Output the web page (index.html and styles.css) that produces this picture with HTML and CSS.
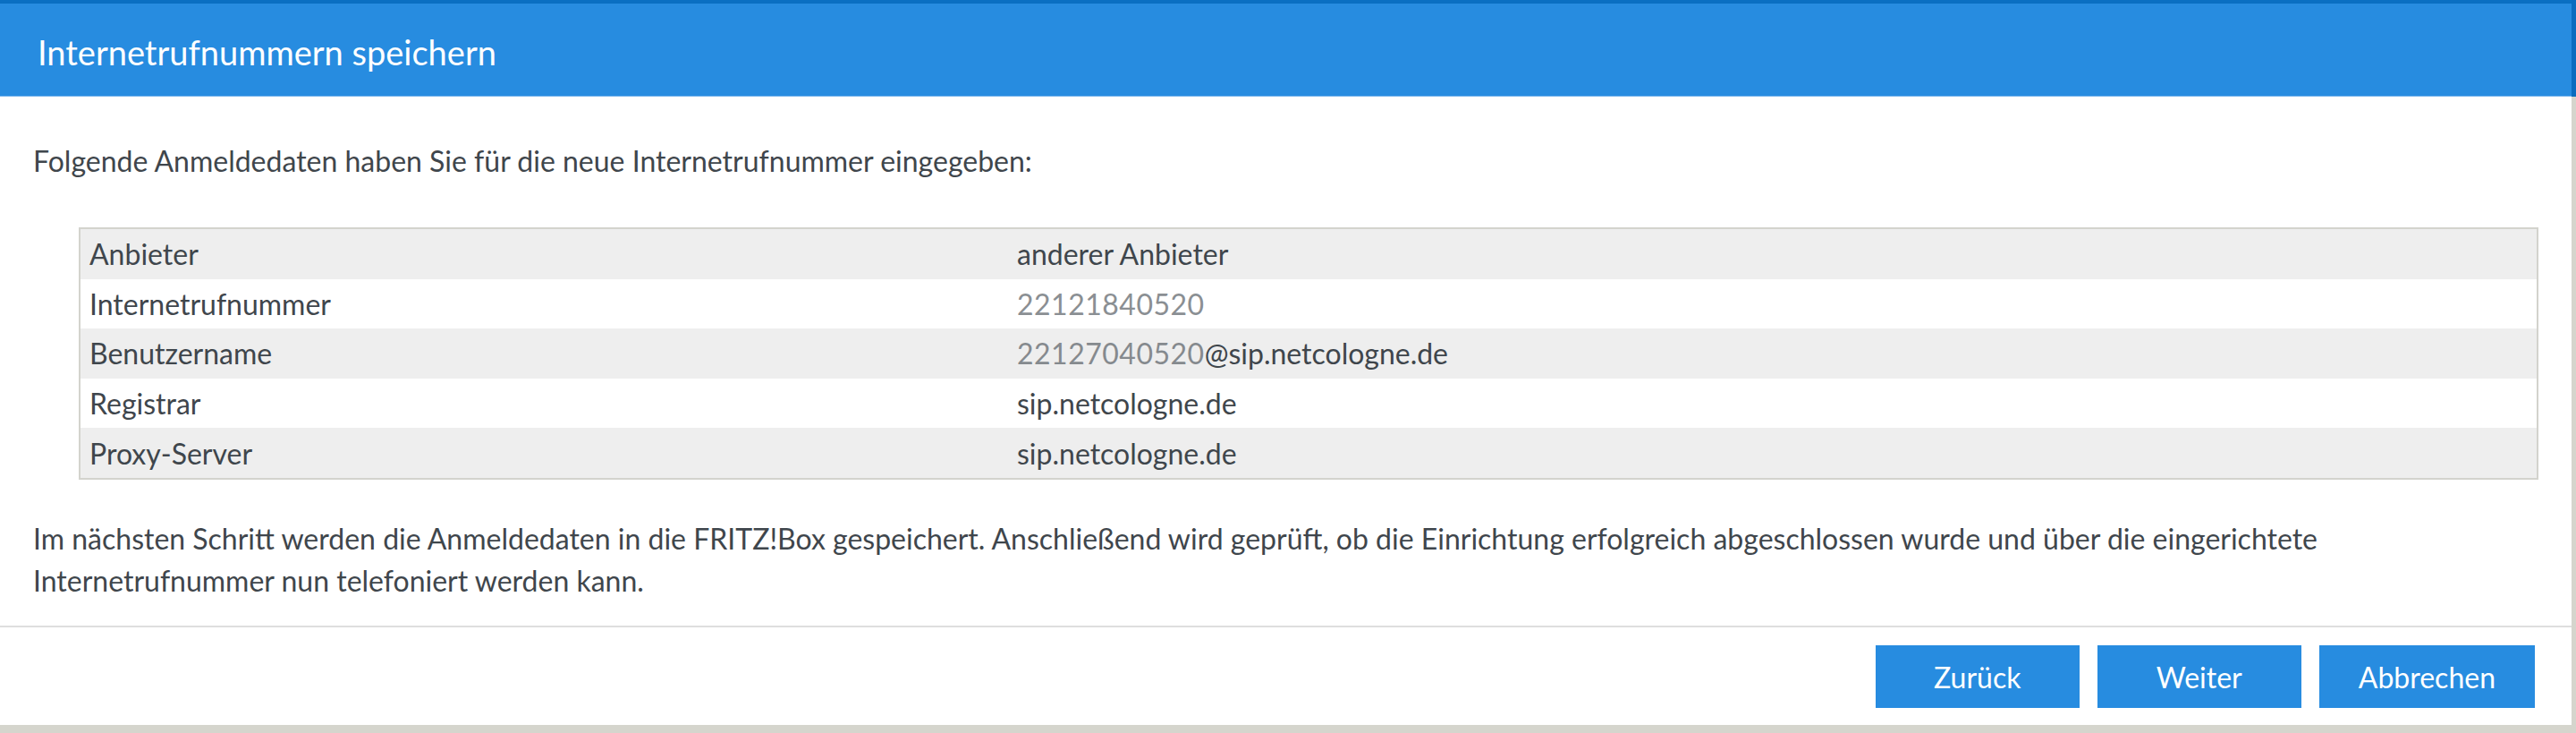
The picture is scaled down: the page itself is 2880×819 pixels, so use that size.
FILE: index.html
```html
<!DOCTYPE html>
<html lang="de">
<head>
<meta charset="utf-8">
<title>Internetrufnummern speichern</title>
<link rel="stylesheet" href="styles.css">
</head>
<body>
<div class="dialog">
  <div class="header">Internetrufnummern speichern</div>
  <div class="content">
    <p class="intro">Folgende Anmeldedaten haben Sie für die neue Internetrufnummer eingegeben:</p>
    <div class="table">
      <div class="row odd"><div class="label">Anbieter</div><div class="value">anderer Anbieter</div></div>
      <div class="row"><div class="label">Internetrufnummer</div><div class="value"><span class="masked">22121840520</span></div></div>
      <div class="row odd"><div class="label">Benutzername</div><div class="value"><span class="masked">22127040520</span>@sip.netcologne.de</div></div>
      <div class="row"><div class="label">Registrar</div><div class="value">sip.netcologne.de</div></div>
      <div class="row odd"><div class="label">Proxy-Server</div><div class="value">sip.netcologne.de</div></div>
    </div>
    <p class="note">Im nächsten Schritt werden die Anmeldedaten in die FRITZ!Box gespeichert. Anschließend wird geprüft, ob die Einrichtung erfolgreich abgeschlossen wurde und über die eingerichtete<br>Internetrufnummer nun telefoniert werden kann.</p>
  </div>
  <div class="footer">
    <button class="btn">Zurück</button>
    <button class="btn">Weiter</button>
    <button class="btn">Abbrechen</button>
  </div>
</div>
</body>
</html>
```

FILE: styles.css
```css
html, body {
  margin: 0;
  padding: 0;
}
body {
  width: 2880px;
  height: 819px;
  background: #d5d5cd;
  font-family: "Lato", "Liberation Sans", sans-serif;
  color: #3f464c;
  overflow: hidden;
}
.dialog {
  width: 2875px;
  height: 810px;
  background: #ffffff;
  display: flex;
  flex-direction: column;
}
.header {
  flex: none;
  box-sizing: border-box;
  height: 108px;
  border-top: 4px solid #0a6fc2;
  border-bottom: 1px solid #79b6ec;
  background: #278ce0;
  box-shadow: 5px 0 0 #0b6cbf;
  color: #ffffff;
  font-size: 38px;
  display: flex;
  align-items: center;
  padding-left: 42px;
  padding-top: 4px;
}
.content {
  flex: 1;
  padding: 0 37px;
  font-size: 32px;
  line-height: 47px;
}
.intro {
  margin: 48px 0 0 0;
}
.table {
  margin: 51px 0 0 51px;
  border: 2px solid #d3d3cd;
  display: flex;
  flex-direction: column;
}
.row {
  height: 55.6px;
  display: flex;
  align-items: center;
  background: #ffffff;
}
.row.odd {
  background: #eeeeee;
}
.label {
  width: 1037px;
  padding-left: 10px;
  box-sizing: border-box;
}
.value {
  padding-left: 10px;
}
.masked {
  color: #5a6066;
  opacity: 0.7;
  letter-spacing: 0.5px;
}
.note {
  margin: 42px 0 0 0;
}
.footer {
  flex: none;
  border-top: 2px solid #dedede;
  padding: 20px 41px 19px 0;
  display: flex;
  justify-content: flex-end;
  gap: 20px;
}
.btn {
  height: 70px;
  min-width: 228px;
  padding: 0 44px;
  border: none;
  background: #278ce0;
  color: #ffffff;
  font-family: "Lato", "Liberation Sans", sans-serif;
  font-size: 32px;
}
```
